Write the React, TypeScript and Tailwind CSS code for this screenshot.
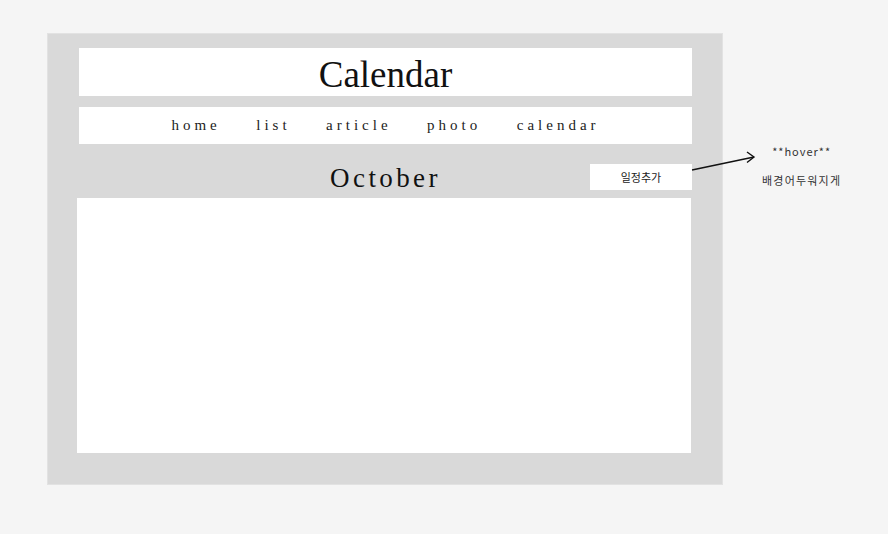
import React from "react";

const serif = { fontFamily: '"Liberation Serif", "DejaVu Serif", serif' };

const navItems = ["home", "list", "article", "photo", "calendar"];

export default function App() {
  return (
    <div className="relative w-[888px] h-[534px] bg-[#f5f5f5] overflow-hidden">
      <div className="flex items-start pt-[33px] pl-[47px]">
        {/* main panel */}
        <div className="w-[676px] h-[452px] bg-[#d9d9d9] border border-[#e2e2e2] pt-[14px] pl-[31px] pr-[30px]">
          <div className="h-[48px] bg-white flex items-center justify-center">
            <h1 className="text-[37px] leading-none text-[#111] pt-[4px]" style={serif}>
              Calendar
            </h1>
          </div>
          <nav className="mt-[11px] h-[37px] bg-white flex items-center justify-center gap-[35.5px]">
            {navItems.map((item) => (
              <span key={item} className="text-[15px] tracking-[4px] text-[#222]" style={serif}>
                {item}
              </span>
            ))}
          </nav>
          <div className="relative h-[54px] flex items-end pb-[8px]">
            <p
              className="absolute left-0 right-0 top-[21px] text-center text-[27px] leading-none tracking-[3.4px] text-[#111]"
              style={serif}
            >
              October
            </p>
            <button
              className="ml-auto w-[102px] h-[26px] bg-white text-[11px] text-[#222] hover:bg-[#cfcfcf]"
              style={{ fontFamily: '"Noto Sans CJK KR", "Noto Sans", sans-serif' }}
            >
              일정추가
            </button>
          </div>
          <div className="h-[255px] -ml-[2px] mr-[1px] bg-white" />
        </div>

        {/* note */}
        <div
          className="ml-[39px] mt-[110px] flex flex-col items-center gap-[12px] text-[11px] text-[#333]"
          style={{ fontFamily: '"Noto Sans CJK KR", "Noto Sans", sans-serif' }}
        >
          <span className="tracking-[1px]">**hover**</span>
          <span className="tracking-[1.2px]">배경어두워지게</span>
        </div>
      </div>

      {/* arrow */}
      <svg className="absolute left-[690px] top-[150px]" width="70" height="24" viewBox="0 0 70 24" fill="none">
        <path d="M2 20 L64 7" stroke="#111" strokeWidth="1.4" />
        <path d="M57 2 L64 7 L57 12.5" stroke="#111" strokeWidth="1.4" strokeLinejoin="miter" />
      </svg>
    </div>
  );
}
